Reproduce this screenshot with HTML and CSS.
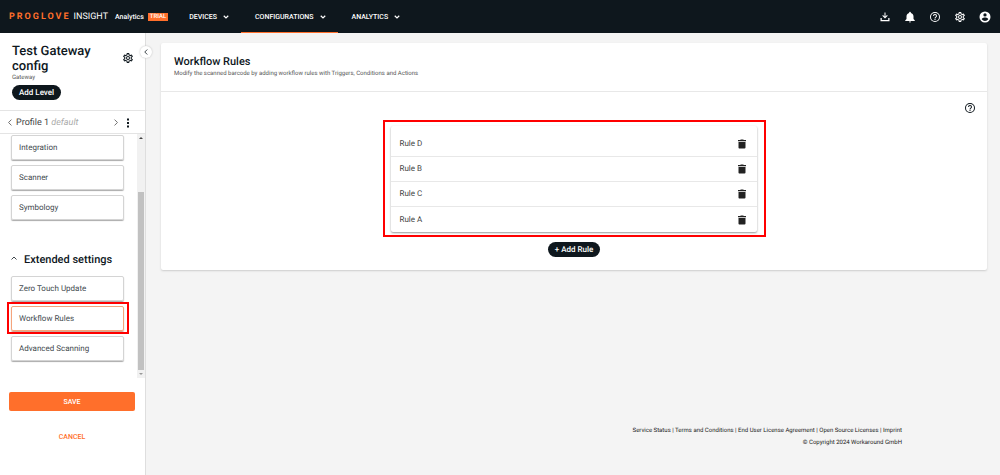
FILE: index.html
```html
<!DOCTYPE html>
<html lang="en">
<head>
<meta charset="utf-8">
<title>Workflow Rules</title>
<link rel="stylesheet" href="styles.css">
</head>
<body>
<svg class="defs" aria-hidden="true">
  <symbol id="gear" viewBox="0 0 24 24"><path fill="currentColor" d="M19.43 12.98c.04-.32.07-.64.07-.98s-.03-.66-.07-.98l2.11-1.65c.19-.15.24-.42.12-.64l-2-3.46c-.09-.16-.26-.25-.44-.25-.06 0-.12.01-.17.03l-2.49 1c-.52-.4-1.08-.73-1.69-.98l-.38-2.65A.49.49 0 0 0 14 2h-4c-.25 0-.46.18-.49.42l-.38 2.65c-.61.25-1.17.59-1.69.98l-2.49-1a.57.57 0 0 0-.18-.03c-.17 0-.34.09-.43.25l-2 3.46c-.13.22-.07.49.12.64l2.11 1.65c-.04.32-.07.65-.07.98s.03.66.07.98l-2.11 1.65c-.19.15-.24.42-.12.64l2 3.46c.09.16.26.25.44.25.06 0 .12-.01.17-.03l2.49-1c.52.4 1.08.73 1.69.98l.38 2.65c.03.24.24.42.49.42h4c.25 0 .46-.18.49-.42l.38-2.65c.61-.25 1.17-.59 1.69-.98l2.49 1c.06.02.12.03.18.03.17 0 .34-.09.43-.25l2-3.46c.12-.22.07-.49-.12-.64l-2.11-1.65zm-1.98-1.71c.04.31.05.52.05.73s-.02.43-.05.73l-.14 1.13.89.7 1.08.84-.7 1.21-1.27-.51-1.04-.42-.9.68c-.43.32-.84.56-1.25.73l-1.06.43-.16 1.13-.2 1.35h-1.4l-.19-1.35-.16-1.13-1.06-.43c-.43-.18-.83-.41-1.23-.71l-.91-.7-1.06.43-1.27.51-.7-1.21 1.08-.84.89-.7-.14-1.13c-.03-.31-.05-.54-.05-.74s.02-.43.05-.73l.14-1.13-.89-.7-1.08-.84.7-1.21 1.27.51 1.04.42.9-.68c.43-.32.84-.56 1.25-.73l1.06-.43.16-1.13.2-1.35h1.39l.19 1.35.16 1.13 1.06.43c.43.18.83.41 1.23.71l.91.7 1.06-.43 1.27-.51.7 1.21-1.07.85-.89.7.14 1.13zM12 8a4 4 0 1 0 0 8 4 4 0 0 0 0-8zm0 6a2 2 0 1 1 0-4 2 2 0 0 1 0 4z"/></symbol>
  <symbol id="help" viewBox="0 0 24 24"><path fill="currentColor" d="M11 18h2v-2h-2v2zm1-16a10 10 0 1 0 0 20 10 10 0 0 0 0-20zm0 18a8 8 0 1 1 0-16 8 8 0 0 1 0 16zm0-14a4 4 0 0 0-4 4h2a2 2 0 1 1 4 0c0 2-3 1.750-3 5h2c0-2.250 3-2.500 3-5a4 4 0 0 0-4-4z"/></symbol>
  <symbol id="trash" viewBox="0 0 24 24"><path fill="currentColor" d="M5 19c0 1.100.9 2 2 2h10a2 2 0 0 0 2-2V8H5v11zM20 4h-4.500l-1-1h-5l-1 1H4v2.500h16V4z"/></symbol>
  <symbol id="chevron" viewBox="0 0 12 12"><path fill="none" stroke="currentColor" stroke-width="2.400" d="M1.500 3.500 6 8l4.500-4.500"/></symbol>
  <symbol id="left" viewBox="0 0 12 12"><path fill="none" stroke="currentColor" stroke-width="1.600" d="M8.500 1 3.500 6l5 5"/></symbol>
  <symbol id="right" viewBox="0 0 12 12"><path fill="none" stroke="currentColor" stroke-width="1.600" d="m3.500 1 5 5-5 5"/></symbol>
  <symbol id="up" viewBox="0 0 12 12"><path fill="none" stroke="currentColor" stroke-width="1.600" d="m1 9 5-5 5 5"/></symbol>
</svg>

<header class="topbar">
  <a class="brand" href="#"><span class="brand-name">PROGLOVE</span><span class="brand-product">INSIGHT</span></a>
  <span class="plan">Analytics</span><span class="trial">TRIAL</span>
  <nav class="menu">
    <button class="menu-item">DEVICES<svg><use href="#chevron"/></svg></button>
    <button class="menu-item active">CONFIGURATIONS<svg><use href="#chevron"/></svg></button>
    <button class="menu-item">ANALYTICS<svg><use href="#chevron"/></svg></button>
  </nav>
  <div class="tools">
    <button class="icon-button" aria-label="Downloads"><svg viewBox="0 0 24 24"><path fill="currentColor" d="M11 3h2v8.200l3-3 1.400 1.400L12 15 6.600 9.600 8 8.200l3 3zM3 14h2.500v4h13v-4H21v6.500H3z"/></svg></button>
    <button class="icon-button" aria-label="Notifications"><svg viewBox="0 0 24 24"><path fill="currentColor" d="M12 23a2 2 0 0 0 2-2h-4a2 2 0 0 0 2 2zm7-7v-5c0-3.500-2-6-5.200-6.800V3.500a1.800 1.800 0 0 0-3.600 0v.7C7 5 5 7.500 5 11v5l-2.500 2.500V20h19v-1.500L19 16z"/></svg></button>
    <button class="icon-button" aria-label="Help"><svg><use href="#help"/></svg></button>
    <button class="icon-button" aria-label="Settings"><svg><use href="#gear"/></svg></button>
    <button class="icon-button" aria-label="Account"><svg viewBox="0 0 24 24"><path fill="currentColor" d="M12 1a11 11 0 1 0 0 22 11 11 0 0 0 0-22zm0 3.500a3.300 3.300 0 1 1 0 6.600 3.300 3.300 0 0 1 0-6.600zm0 15.500a8 8 0 0 1-6.600-3.500c.03-2.200 4.400-3.400 6.600-3.400s6.570 1.200 6.600 3.400A8 8 0 0 1 12 20z"/></svg></button>
  </div>
</header>

<div class="shell">
  <aside class="sidebar">
    <button class="collapse" aria-label="Collapse sidebar"><svg><use href="#left"/></svg></button>
    <div class="config">
      <div class="config-text">
        <h1>Test Gateway config</h1>
        <p>Gateway</p>
        <button class="pill">Add Level</button>
      </div>
      <button class="icon-button config-gear" aria-label="Configuration settings"><svg><use href="#gear"/></svg></button>
    </div>
    <div class="profile">
      <button class="arrow" aria-label="Previous profile"><svg><use href="#left"/></svg></button>
      <span class="profile-name">Profile 1 <em>default</em></span>
      <button class="arrow" aria-label="Next profile"><svg><use href="#right"/></svg></button>
      <button class="more" aria-label="More"><svg viewBox="0 0 4 12"><path fill="currentColor" d="M.8.500h2.400v2.400H.8zM.8 4.800h2.400v2.400H.8zM.8 9.100h2.400v2.400H.8z"/></svg></button>
    </div>
    <div class="settings">
      <div class="settings-list">
        <button class="setting">Integration</button>
        <button class="setting">Scanner</button>
        <button class="setting">Symbology</button>
        <h2><svg><use href="#up"/></svg>Extended settings</h2>
        <button class="setting">Zero Touch Update</button>
        <div class="marked"><button class="setting selected">Workflow Rules</button></div>
        <button class="setting">Advanced Scanning</button>
      </div>
      <div class="scrollbar" aria-hidden="true">
        <svg viewBox="0 0 8 8"><path fill="#444" d="M2 5h4L4 3z"/></svg>
        <div class="thumb"></div>
        <svg viewBox="0 0 8 8"><path fill="#999" d="M2 3h4L4 5z"/></svg>
      </div>
    </div>
    <div class="actions">
      <button class="save">SAVE</button>
      <button class="cancel">CANCEL</button>
    </div>
  </aside>

  <main class="content">
    <section class="card">
      <header class="card-head">
        <h2>Workflow Rules</h2>
        <p>Modify the scanned barcode by adding workflow rules with Triggers, Conditions and Actions</p>
      </header>
      <div class="card-body">
        <button class="icon-button card-help" aria-label="Help"><svg><use href="#help"/></svg></button>
        <div class="rules-frame">
          <ul class="rules">
            <li>Rule D<button class="icon-button" aria-label="Delete Rule D"><svg><use href="#trash"/></svg></button></li>
            <li>Rule B<button class="icon-button" aria-label="Delete Rule B"><svg><use href="#trash"/></svg></button></li>
            <li>Rule C<button class="icon-button" aria-label="Delete Rule C"><svg><use href="#trash"/></svg></button></li>
            <li>Rule A<button class="icon-button" aria-label="Delete Rule A"><svg><use href="#trash"/></svg></button></li>
          </ul>
        </div>
        <button class="pill">+ Add Rule</button>
      </div>
    </section>
    <footer class="footer">
      <p><a href="#">Service Status</a> | <a href="#">Terms and Conditions</a> | <a href="#">End User License Agreement</a> | <a href="#">Open Source Licenses</a> | <a href="#">Imprint</a></p>
      <p>© Copyright 2024 Workaround GmbH</p>
    </footer>
  </main>
</div>
</body>
</html>
```
FILE: styles.css
```css
* { box-sizing: border-box; }
body {
  margin: 0;
  min-height: 100vh;
  display: flex;
  flex-direction: column;
  background: #f4f4f4;
  color: #0e171d;
  font: 8px/12px Roboto, "Liberation Sans", sans-serif;
  text-rendering: geometricPrecision;
}
h1, h2, p, ul { margin: 0; padding: 0; }
h1, h2 { font-weight: 500; }
a { color: inherit; text-decoration: none; }
button {
  margin: 0;
  padding: 0;
  border: 0;
  background: none;
  color: inherit;
  font: inherit;
  text-rendering: inherit;
}
svg { display: block; }
.defs { position: absolute; width: 0; height: 0; }
.icon-button svg { width: 12px; height: 12px; }

.topbar {
  height: 33px;
  display: flex;
  align-items: center;
  padding: 0 9px;
  background: #0e171d;
  color: #fff;
}
.brand { display: flex; gap: 3px; font-size: 9px; }
.brand-name { color: #ff6f2b; font-weight: 700; letter-spacing: 2px; }
.plan { margin-left: 7px; font-size: 7px; font-weight: 500; }
.trial {
  margin-left: 4px;
  padding: 0 2px;
  background: #ff6f2b;
  font-size: 6px;
  line-height: 8px;
  font-weight: 500;
}
.menu { display: flex; align-self: stretch; margin-left: 7px; }
.menu-item {
  display: flex;
  align-items: center;
  gap: 6px;
  padding: 0 12px 0 14px;
  font-size: 7px;
  font-weight: 500;
}
.menu-item svg { width: 6px; height: 6px; }
.menu-item.active { border-bottom: 1px solid #ff6f2b; border-top: 1px solid transparent; }
.tools { display: flex; gap: 13px; margin-left: auto; }

.shell { flex: 1; display: flex; }
.sidebar {
  position: relative;
  flex: 0 0 146px;
  display: flex;
  flex-direction: column;
  background: #fff;
  border-right: 1px solid #dedede;
}
.collapse {
  position: absolute;
  top: 13px;
  right: -7px;
  width: 12px;
  height: 12px;
  display: grid;
  place-items: center;
  border-radius: 50%;
  background: #fff;
  box-shadow: 0 0 2px #bbb;
}
.collapse svg { width: 6px; height: 6px; }
.config {
  display: flex;
  justify-content: space-between;
  padding: 11px 11px 10px 12px;
  border-bottom: 1px solid #e4e4e4;
}
.config h1 { font-size: 13px; line-height: 15px; }
.config p { font-size: 6px; line-height: 8px; color: #555; }
.config-text { flex: 1; }
.config-gear { align-self: flex-start; margin-top: 8px; }
.pill {
  height: 15px;
  padding: 0 7px;
  border-radius: 8px;
  background: #0e171d;
  color: #fff;
  font-size: 8px;
  font-weight: 500;
}
.config .pill { margin-top: 3px; }
.profile {
  height: 23px;
  display: flex;
  align-items: center;
  padding: 1px 15px 0 6px;
  border-bottom: 1px solid #e4e4e4;
  color: #444;
}
.profile-name { flex: 1; margin-left: 2px; font-size: 9px; }
.profile em { color: #aaa; }
.arrow svg { width: 8px; height: 7px; color: #666; }
.more svg { width: 4px; height: 10px; margin-left: 6px; color: #0e171d; }
.settings { display: flex; justify-content: space-between; }
.settings-list {
  display: flex;
  flex-direction: column;
  gap: 5px;
  width: 124px;
  padding: 1px 0 17px 11px;
}
.setting {
  width: 100%;
  height: 25px;
  padding: 0 7px;
  border: 1px solid #d4d4d4;
  border-radius: 2px;
  box-shadow: 0 1px 1px #aaa;
  color: #444b50;
  font-size: 8px;
  text-align: left;
}
.setting.selected { border-color: #f5a47c; box-shadow: 0 1px 1px #c9a28f; }
.marked { position: relative; }
.marked::after {
  content: "";
  position: absolute;
  inset: -4px -5px -3px -4px;
  border: 2px solid #f00;
}
.settings h2 {
  display: flex;
  align-items: center;
  gap: 7px;
  padding: 28px 0 4px;
  font-size: 11px;
  line-height: 14px;
}
.settings h2 svg { width: 6px; height: 6px; margin-bottom: 4px; }
.scrollbar {
  display: grid;
  grid-template-rows: 8px 1fr 8px;
  width: 8px;
  background: #f1f1f1;
}
.thumb { margin: 50px 1px 0; background: #c1c1c1; }
.actions { display: grid; gap: 16px; padding: 14px 10px 0 9px; font-weight: 500; }
.save, .cancel { height: 19px; border-radius: 2px; font-size: 7px; }
.save { background: #ff6f2b; color: #fff; }
.cancel { color: #ff6f2b; }

.content { flex: 1; display: flex; flex-direction: column; padding: 10px 13px 0 15px; }
.card { background: #fff; border-radius: 2px; box-shadow: 0 1px 2px #ccc; }
.card-head { padding: 12px 13px; border-bottom: 1px solid #e8e8e8; }
.card-head h2 { font-size: 11px; line-height: 14px; }
.card-head p { font-size: 6px; line-height: 10px; color: #555; }
.card-body {
  display: flex;
  flex-direction: column;
  align-items: center;
  padding: 10px 11px 13px;
}
.card-help { align-self: flex-end; }
.rules-frame {
  width: 383px;
  max-width: 100%;
  margin: 6px 0 5px;
  padding: 4px 7px 3px 6px;
  border: 2px solid #f00;
}
.rules { list-style: none; box-shadow: 0 1px 2px #999; border-radius: 2px; padding-top: 6px; }
.rules li {
  display: flex;
  align-items: center;
  justify-content: space-between;
  height: 25px;
  padding: 0 9px;
  border-bottom: 1px solid #e8e8e8;
  color: #444;
}
.rules li:last-child { border-bottom: 0; }
.rules .icon-button { color: #222; }
.footer {
  margin: auto 85px 26px auto;
  font-size: 6px;
  text-align: right;
  color: #222;
}
```
